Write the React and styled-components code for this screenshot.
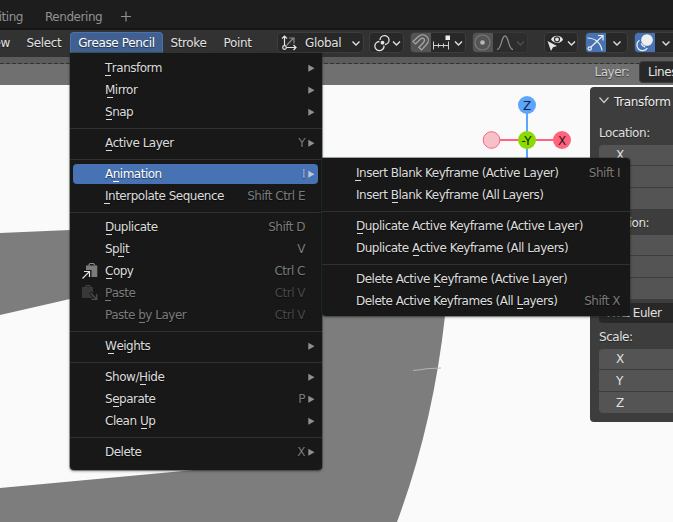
import React from "react";
import styled, { createGlobalStyle, css } from "styled-components";

const Global = createGlobalStyle`
  * { box-sizing: border-box; }
  body { margin: 0; background: #1d1d1d; }
`;

const Screen = styled.div`
  position: relative;
  width: 673px;
  height: 522px;
  overflow: hidden;
  display: flex;
  flex-direction: column;
  font: 12px/22px "DejaVu Sans", sans-serif;
  letter-spacing: -0.45px;
  color: #e0e0e0;
  white-space: pre;
`;

const Workspaces = styled.nav`
  display: flex;
  flex: 0 0 30px;
  padding-top: 6px;
  background: #1d1d1d;
  border-bottom: 2px solid #161616;
  color: #919191;
`;

const Workspace = styled.span`
  flex: none;
  width: ${(p) => p.$width}px;
  margin-left: ${(p) => p.$left || 0}px;
  display: flex;
  justify-content: ${(p) => (p.$end ? "flex-end" : "flex-start")};
  svg { margin-top: 5px; }
`;

const Header = styled.header`
  display: flex;
  flex: 0 0 27px;
  padding-top: 2px;
  background: #323232;
  letter-spacing: -0.35px;
`;

const MenuTitle = styled.span`
  flex: none;
  height: 21px;
  width: ${(p) => p.$width}px;
  display: flex;
  justify-content: ${(p) => (p.$end ? "flex-end" : "center")};
  padding-left: ${(p) => p.$inset || 0}px;
  text-shadow: 0 1px 1px #0008;
  ${(p) => p.$active && css`
    background: #41608f;
    border: 1px solid #4772b3;
    border-bottom: 0;
    border-radius: 4px 4px 0 0;
    line-height: 20px;
    color: #fff;
  `}
`;

const Control = styled.div`
  flex: none;
  display: flex;
  height: 21px;
  width: ${(p) => p.$width}px;
  margin-left: ${(p) => p.$gap}px;
  border: 1px solid ${(p) => (p.$dim ? "#383838" : "#3d3d3d")};
  border-radius: 4px;
  overflow: hidden;
  background: ${(p) => (p.$dim ? "#2d2d2d" : "#282828")};
  line-height: 20px;
  text-shadow: 0 1px 1px #0008;
  svg { flex: none; margin-top: -1px; }
`;

const Toggle = styled.span`
  flex: none;
  display: flex;
  width: 20px;
  background: ${(p) => (p.$on ? "#4772b3" : "#545454")};
`;

const ControlLabel = styled.span`
  width: 44px;
`;

const ToolStrip = styled.div`
  display: flex;
  flex: 0 0 28px;
  justify-content: flex-end;
  background: linear-gradient(#5c5c5c 6px, #707070 6px);
  color: #d0d0d0;
  position: relative;
`;

const Dashes = styled.i`
  position: absolute;
  inset: 6px 0 auto;
  height: 1px;
  background: repeating-linear-gradient(90deg, #333 0 4px, #5c5c5c 4px 6px);
`;

const LayerLabel = styled.span`
  margin: 4px 10px 0 0;
  text-shadow: 0 1px 1px #0008;
`;

const LayerField = styled.span`
  width: 34px;
  height: 22px;
  margin-top: 4px;
  padding-left: 8px;
  overflow: hidden;
  border: solid #3d3d3d;
  border-width: 1px 0 1px 1px;
  border-radius: 4px 0 0 4px;
  background: #282828;
  line-height: 20px;
  color: #e6e6e6;
  position: relative;
`;

const Viewport = styled.main`
  position: relative;
  flex: 1;
  display: flex;
  justify-content: flex-end;
  align-items: flex-start;
  padding-top: 2px;
  background: #fafafa;
`;

const Scene = styled.svg`
  position: absolute;
  inset: 0;
`;

const Sidebar = styled.aside`
  position: relative;
  width: 83px;
  height: 335px;
  padding: 4px 0 0 9px;
  border-radius: 4px 0 0 4px;
  background: #3d3d3d;
  overflow: hidden;
`;

const PanelTitle = styled.div`
  display: flex;
  height: 32px;
  color: #eee;
  letter-spacing: -0.35px;
  svg { margin: 5px 4px 0 0; flex: none; }
  text-shadow: 0 1px 1px #0008;
`;

const GroupLabel = styled.div`
  height: 22px;
  line-height: ${(p) => p.$line || 20}px;
  margin-bottom: ${(p) => p.$space || 0}px;
  text-shadow: 0 1px 1px #0006;
`;

const Fields = styled.div`
  display: grid;
  grid-template-rows: 20px 21px 21px;
  gap: 1px;
  margin-bottom: ${(p) => p.$after}px;
  border-radius: 4px 0 0 4px;
  overflow: hidden;
`;

const Field = styled.div`
  padding-left: 17px;
  background: #545454;
  line-height: 20px;
  & + & { line-height: 22px; }
`;

const ModeSelect = styled.div`
  height: 20px;
  padding-left: 8px;
  margin-bottom: 3px;
  border-radius: 4px 0 0 4px;
  background: #282828;
  line-height: 20px;
`;

const Menu = styled.div`
  position: absolute;
  left: ${(p) => p.$x}px;
  top: ${(p) => p.$y}px;
  width: ${(p) => p.$width}px;
  height: ${(p) => p.$height}px;
  display: flex;
  flex-direction: column;
  padding: 4px 0;
  border-radius: ${(p) => p.$radius};
  background: #181818;
  box-shadow: 0 0 0 1px #2426, 0 1px 3px #0007;
  letter-spacing: -0.5px;
`;

const Row = styled.div`
  flex: none;
  display: flex;
  align-items: center;
  height: ${(p) => (p.$active ? 20 : 22)}px;
  margin: ${(p) => (p.$active ? "1px 4px 1px 3px" : "0 4px 0 3px")};
  padding-left: ${(p) => (p.$sub ? 31 : 9)}px;
  padding-right: 3px;
  border-radius: 4px;
  background: ${(p) => (p.$active ? "#4772b3" : "transparent")};
  color: ${(p) => (p.$disabled ? "#7b7b7b" : p.$active ? "#fff" : "#dcdcdc")};
  text-shadow: 0 1px 1px #0008;
  > svg { flex: none; }
`;

const IconSlot = styled.span`
  display: flex;
  flex: none;
  width: 23px;
`;

const RowLabel = styled.span`
  flex: 1;
  line-height: 20px;
`;

const Key = styled.span`
  position: relative;
  &::after {
    content: "";
    position: absolute;
    left: calc(50% - 3px);
    bottom: -1px;
    width: 6px;
    height: 1px;
    background: currentColor;
  }
`;

const Shortcut = styled.span`
  line-height: 20px;
  margin-right: 3px;
  color: ${(p) => (p.$disabled ? "#484848" : p.$active ? "#a3b8d8" : "#7a7a7a")};
`;

const Separator = styled.hr`
  flex: none;
  width: 100%;
  height: 1px;
  margin: 5px 0 3px;
  border: 0;
  background: #303030;
`;

const Chevron = ({ w = 18, color = "#e0e0e0" }) => (
  <svg width={w} height="20" viewBox={`0 0 ${w} 20`} fill="none" stroke={color} strokeWidth="1.4">
    <path d={`M${w / 2 - 3.5} 9.500l3.500 3.500 3.500-3.500`} />
  </svg>
);

const Arrow = ({ active }) => (
  <svg width="7" height="8" viewBox="0 0 7 8">
    <path d="M.3 .8v7l6.200-3.500z" fill={active ? "#b5c7e1" : "#909090"} />
  </svg>
);

const ClipIcon = ({ paste }) => (
  <svg width="17" height="18" viewBox="0 0 17 18" fill="none">
    {paste ? (
      <>
        <path d="M0 3h11v6L9 7.500 7 9.500l4 4.500H0z" fill="#383838" />
        <path d="M3 3.500l1.500-2h3L9 3.500" stroke="#484848" strokeWidth="1.200" />
        <path d="M8.500 9l6 6m.3-5v5.300H9.500" stroke="#505050" strokeWidth="1.200" />
      </>
    ) : (
      <>
        <path d="M4 3.500h11.300V15H9.500V8H4z" fill="#7b7b7b" />
        <path d="M6.500 3.500l1.500-2h3.500l1.500 2" stroke="#8b8b8b" strokeWidth="1.200" />
        <path d="M.5 16.500l6.800-6.800M2 9.500h5.500V15" stroke="#e4e4e4" strokeWidth="1.200" />
      </>
    )}
  </svg>
);

const MENU = [
  { t: "Transform", k: 0, arrow: 1 },
  { t: "Mirror", k: 0, arrow: 1 },
  { t: "Snap", k: 0, arrow: 1 },
  null,
  { t: "Active Layer", k: 0, s: "Y", arrow: 1 },
  null,
  { t: "Animation", k: 1, s: "I", arrow: 1, active: 1 },
  { t: "Interpolate Sequence", k: 0, s: "Shift Ctrl E" },
  null,
  { t: "Duplicate", k: 0, s: "Shift D" },
  { t: "Split", k: 2, s: "V" },
  { t: "Copy", k: 0, s: "Ctrl C", icon: <ClipIcon /> },
  { t: "Paste", k: 0, s: "Ctrl V", icon: <ClipIcon paste />, disabled: 1 },
  { t: "Paste by Layer", k: 6, s: "Ctrl V", disabled: 1 },
  null,
  { t: "Weights", k: 0, arrow: 1 },
  null,
  { t: "Show/Hide", k: 5, arrow: 1 },
  { t: "Separate", k: 1, s: "P", arrow: 1 },
  { t: "Clean Up", k: 6, arrow: 1 },
  null,
  { t: "Delete", s: "X", arrow: 1 },
];

const SUBMENU = [
  { t: "Insert Blank Keyframe (Active Layer)", k: 0, s: "Shift I" },
  { t: "Insert Blank Keyframe (All Layers)", k: 7 },
  null,
  { t: "Duplicate Active Keyframe (Active Layer)", k: 0 },
  { t: "Duplicate Active Keyframe (All Layers)", k: 10 },
  null,
  { t: "Delete Active Keyframe (Active Layer)", k: 14 },
  { t: "Delete Active Keyframes (All Layers)", k: 29, s: "Shift X" },
];

function Items({ items, sub }) {
  return items.map((it, i) =>
    it ? (
      <Row key={i} $sub={sub} $active={it.active} $disabled={it.disabled}>
        {!sub && <IconSlot>{it.icon}</IconSlot>}
        <RowLabel>
          {it.k === undefined ? it.t : (
            <>{it.t.slice(0, it.k)}<Key>{it.t[it.k]}</Key>{it.t.slice(it.k + 1)}</>
          )}
        </RowLabel>
        {it.s && <Shortcut $active={it.active} $disabled={it.disabled}>{it.s}</Shortcut>}
        {!sub && (it.arrow ? <Arrow active={it.active} /> : <svg width="7" height="8" />)}
      </Row>
    ) : <Separator key={i} />
  );
}

const GizmoText = styled.text`
  font-size: 12px;
  letter-spacing: 0;
  text-anchor: middle;
`;

export default function App() {
  return (
    <Screen>
      <Global />
      <Workspaces>
        <Workspace $width={23} $end>iting</Workspace>
        <Workspace $left={22} $width={75}>Rendering</Workspace>
        <Workspace $width={14}>
          <svg width="12" height="12" stroke="#919191" strokeWidth="1.2"><path d="M1 5.500h10M6 .5v10" /></svg>
        </Workspace>
      </Workspaces>
      <Header>
        <MenuTitle $width={10} $end>ew</MenuTitle>
        <MenuTitle $width={60} $inset={8}>Select</MenuTitle>
        <MenuTitle $width={93} $active>Grease Pencil</MenuTitle>
        <MenuTitle $width={51}>Stroke</MenuTitle>
        <MenuTitle $width={47}>Point</MenuTitle>
        <Control $gap={16} $width={87}>
          <svg width="27" height="21" viewBox="0 0 27 21" fill="none" stroke="#e4e4e4" strokeWidth="1.2">
            <path d="M6.500 13.500V4M4 6.500L6.500 4 9 6.500M8.500 15.500H18M15.500 13l2.500 2.500L15.500 18" />
            <circle cx="6.500" cy="15.500" r="1.800" />
            <path d="M8.500 13.500l7-7.500m-4.500 0h5v5.500" stroke="#8a8a8a" />
          </svg>
          <ControlLabel>Global</ControlLabel>
          <Chevron w={14} />
        </Control>
        <Control $gap={5} $width={35}>
          <svg width="21" height="21" viewBox="0 0 21 21" fill="none" stroke="#e4e4e4" strokeWidth="1.300">
            <path d="M10 8a4.500 4.500 0 1 1 5 4.500M14 13.500A4.600 4.600 0 1 1 9.500 9.500" />
            <circle cx="12.500" cy="10.700" r="1.900" fill="#e4e4e4" stroke="none" />
          </svg>
          <Chevron w={11} />
        </Control>
        <Control $gap={6} $width={56}>
          <Toggle>
            <svg width="20" height="21" viewBox="0 0 20 21" fill="none" stroke="#a8a8a8" strokeWidth="1.200">
              <path d="M2 9.500L7.500 4.500C13-.5 21 6.500 15.500 12.500L10.500 18 7.800 15.500 12.500 10.500C15 7.500 12 4.500 9.500 7L4.500 12z" />
            </svg>
          </Toggle>
          <svg width="21" height="21" viewBox="0 0 21 21" stroke="#d0d0d0" fill="none">
            <path d="M2.500 13.500h15M2.500 9.500v8M7.500 11.500v4M12.500 11.500v4M17.500 9.500v8" />
            <path d="M14.500 3.500h4.500V8h-4.500z" fill="#eee" stroke="none" />
          </svg>
          <Chevron w={13} />
        </Control>
        <Control $gap={6} $width={56} $dim>
          <Toggle>
            <svg width="20" height="21" viewBox="0 0 20 21" fill="none" stroke="#7c7c7c" strokeWidth="1.200">
              <circle cx="9.500" cy="10.500" r="7.500" /><circle cx="9.500" cy="10.500" r="2.300" fill="#b8b8b8" stroke="none" />
            </svg>
          </Toggle>
          <svg width="22" height="21" viewBox="0 0 22 21" fill="none" stroke="#8b8b8b" strokeWidth="1.300">
            <path d="M4 17.500c5 0 4-13.500 8-13.500s3 13.500 8 13.500" />
          </svg>
          <Chevron w={11} color="#505050" />
        </Control>
        <Control $gap={16} $width={34}>
          <svg width="20" height="21" viewBox="0 0 20 21" fill="#e4e4e4">
            <path d="M2.500 9l9.500 5-4 1.200L6 19z" />
            <path d="M6 7.500C8 2.500 16 2.500 18 7.500 16 12 9 12 6 7.500z" />
            <circle cx="12" cy="7.300" r="2.500" fill="none" stroke="#282828" strokeWidth="1.200" />
          </svg>
          <Chevron w={13} />
        </Control>
        <Control $gap={7} $width={43}>
          <Toggle $on>
            <svg width="20" height="21" viewBox="0 0 20 21" fill="none" stroke="#eee" strokeWidth="1.200">
              <path d="M1.500 6C9 6 15 11 16 18.500M5 15L17 3.500m-5 0h5v5" /><circle cx="3.700" cy="16.500" r="1.700" />
            </svg>
          </Toggle>
          <Chevron w={22} />
        </Control>
        <Control $gap={6} $width={44}>
          <Toggle $on>
            <svg width="20" height="21" viewBox="0 0 20 21" fill="none" stroke="#eee" strokeWidth="1.300">
              <circle cx="12" cy="8" r="5.200" fill="#eee" />
              <path d="M4.500 8.200a5.700 5.700 0 1 0 7.800 8M6.200 11.500c.6 2 2 3 4 3.500" />
            </svg>
          </Toggle>
          <Chevron w={22} />
        </Control>
      </Header>
      <ToolStrip>
        <Dashes />
        <LayerLabel>Layer:</LayerLabel>
        <LayerField>Lines</LayerField>
      </ToolStrip>
      <Viewport>
        <Scene width="673" height="437" viewBox="0 85 673 437">
          <path d="M0 233L70 230H330L445 316Q433 425 397 522H0V488L194 470H320V240L70 299L0 315z" fill="#7d7d7d" />
          <path d="M413 370.500l9-1 5-.8 14-.7" fill="none" stroke="#b5b5b5" />
          <path d="M527 105v70" stroke="#5ba5ff" strokeWidth="2" />
          <path d="M500 140h62" stroke="#ff637d" strokeWidth="2" />
          <circle cx="491.500" cy="140" r="8.300" fill="#f6c1c9" stroke="#ff637d" />
          <circle cx="527" cy="105" r="9" fill="#5ba5ff" />
          <circle cx="527" cy="140" r="9" fill="#8adb00" />
          <circle cx="562" cy="140" r="9" fill="#ff637d" />
          <GizmoText x="527" y="109.500" fill="#14253a">Z</GizmoText>
          <GizmoText x="526.500" y="144.500" fill="#182600">-Y</GizmoText>
          <GizmoText x="562" y="144.500" fill="#3c141b">X</GizmoText>
        </Scene>
        <Sidebar>
          <PanelTitle>
            <svg width="11" height="10" fill="none" stroke="#ccc" strokeWidth="1.200"><path d="M.5 1.500L5 6.500l4.500-5" /></svg>
            Transform
          </PanelTitle>
          <GroupLabel>Location:</GroupLabel>
          <Fields $after={4}><Field>X</Field><Field>Y</Field><Field>Z</Field></Fields>
          <GroupLabel>Rotation:</GroupLabel>
          <Fields $after={4}><Field>X</Field><Field>Y</Field><Field>Z</Field></Fields>
          <ModeSelect>XYZ Euler</ModeSelect>
          <GroupLabel $space={1} $line={22}>Scale:</GroupLabel>
          <Fields $after={0}><Field>X</Field><Field>Y</Field><Field>Z</Field></Fields>
        </Sidebar>
      </Viewport>
      <Menu $x={70} $y={53} $width={252} $height={417} $radius="0 0 4px 4px"><Items items={MENU} /></Menu>
      <Menu $x={322} $y={158} $width={308} $height={158} $radius="0 4px 4px 4px"><Items items={SUBMENU} sub /></Menu>
    </Screen>
  );
}
